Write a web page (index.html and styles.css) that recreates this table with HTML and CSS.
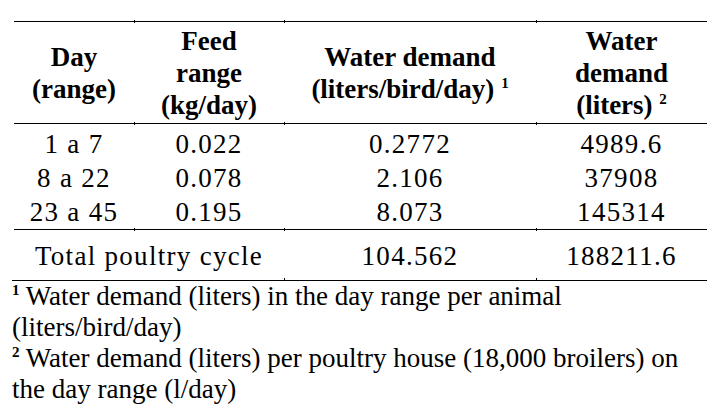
FILE: index.html
```html
<!DOCTYPE html>
<html>
<head>
<meta charset="utf-8">
<title>Water demand</title>
<link rel="stylesheet" href="styles.css">
</head>
<body>
<div class="page">
  <table class="data">
    <colgroup>
      <col class="c1"><col class="c2"><col class="c3"><col class="c4">
    </colgroup>
    <thead>
      <tr>
        <th>Day<br>(range)</th>
        <th class="tk">Feed<br>range<br>(kg/day)</th>
        <th class="tk">Water demand<br>(liters/bird/day) <sup>1</sup></th>
        <th class="tk">Water<br>demand<br>(liters) <sup>2</sup></th>
      </tr>
    </thead>
    <tbody>
      <tr class="first">
        <td>1 a 7</td>
        <td class="tk">0.022</td>
        <td class="tk">0.2772</td>
        <td class="tk">4989.6</td>
      </tr>
      <tr>
        <td>8 a 22</td>
        <td>0.078</td>
        <td>2.106</td>
        <td>37908</td>
      </tr>
      <tr class="last">
        <td>23 a 45</td>
        <td class="bk">0.195</td>
        <td class="bk">8.073</td>
        <td class="bk">145314</td>
      </tr>
      <tr class="total">
        <td colspan="2">Total poultry cycle</td>
        <td class="bk">104.562</td>
        <td class="bk">188211.6</td>
      </tr>
    </tbody>
  </table>
  <div class="notes">
    <p class="note"><sup>1</sup> Water demand (liters) in the day range per animal<br>(liters/bird/day)</p>
    <p class="note"><sup>2</sup> Water demand (liters) per poultry house (18,000 broilers) on<br>the day range (l/day)</p>
  </div>
</div>
</body>
</html>
```

FILE: styles.css
```css
html {
  font-family: "Liberation Serif", Tinos, "Times New Roman", serif;
}

body {
  font-family: "Liberation Serif", Tinos, "Times New Roman", serif;
  margin: 0;
}

.page {
  padding-top: 21px;
}

.data {
  margin-left: 14px;
  width: 693px;
  table-layout: fixed;
  border-collapse: separate;
  border-spacing: 0;
  font-size: 27px;
}

.c1 { width: 120px; }
.c2 { width: 150px; }
.c3 { width: 252px; }
.c4 { width: 171px; }

.data th,
.data td {
  position: relative;
  padding: 0;
  text-align: center;
  vertical-align: middle;
  white-space: nowrap;
}

.data th {
  font-weight: bold;
  line-height: 32px;
  padding: 3px 0 2px;
  border-top: 1px solid #000;
  border-bottom: 1px solid #000;
}

.data td {
  line-height: 34px;
  letter-spacing: 1.3px;
}

.data tr.first td {
  padding-top: 3px;
}

.data tr.last td {
  border-bottom: 1px solid #000;
}

.data tr.total td {
  padding: 9px 0 7px;
}

sup {
  font-size: 15px;
  font-weight: bold;
  line-height: 0;
  letter-spacing: 0;
}

.tk::before,
th.tk::after,
tr.last .bk::after,
tr.total .bk::after {
  content: "";
  position: absolute;
  left: 0;
  width: 1px;
  height: 3px;
  background: #000;
}

.tk::before { top: -2px; }
th.tk::after { bottom: -2px; }
tr.last .bk::after { bottom: -2px; }
tr.total .bk::after { bottom: -1px; z-index: 1; }

.notes {
  margin-left: 12px;
  width: 695px;
  border-top: 1px solid #000;
  font-size: 27px;
  line-height: 31px;
}

.note {
  margin: 0;
  white-space: nowrap;
}
```
